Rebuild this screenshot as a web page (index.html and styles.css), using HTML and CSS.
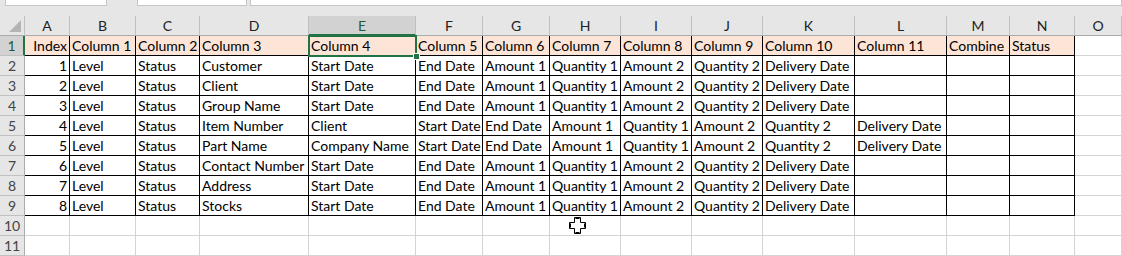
FILE: index.html
```html
<!DOCTYPE html>
<html lang="en">
  <head>
    <meta charset="UTF-8" />
    <title>Sheet1</title>
    <link rel="stylesheet" href="styles.css">
  </head>
  <body>
    <div class="formula-bar">
      <div class="box name-box"></div>
      <div class="box fx-box"></div>
      <div class="box input-box"></div>
    </div>
    <div class="sheet">
      <!-- column headers -->
      <div class="ch corner"><span class="tri"></span></div>
      <div class="ch">A</div><div class="ch">B</div><div class="ch">C</div><div class="ch">D</div>
      <div class="ch active">E</div><div class="ch">F</div><div class="ch">G</div><div class="ch">H</div>
      <div class="ch">I</div><div class="ch">J</div><div class="ch">K</div><div class="ch">L</div>
      <div class="ch">M</div><div class="ch">N</div><div class="ch">O</div>

      <!-- row 1 -->
      <div class="rh active">1</div>
      <div class="c b hd num">Index</div><div class="c b hd">Column 1</div><div class="c b hd">Column 2</div>
      <div class="c b hd">Column 3</div><div class="c b hd sel">Column 4</div><div class="c b hd">Column 5</div>
      <div class="c b hd">Column 6</div><div class="c b hd">Column 7</div><div class="c b hd">Column 8</div>
      <div class="c b hd">Column 9</div><div class="c b hd">Column 10</div><div class="c b hd">Column 11</div>
      <div class="c b hd">Combine</div><div class="c b hd">Status</div><div class="c"></div>

      <!-- row 2 -->
      <div class="rh">2</div>
      <div class="c b num">1</div><div class="c b">Level</div><div class="c b">Status</div>
      <div class="c b">Customer</div><div class="c b">Start Date</div><div class="c b">End Date</div>
      <div class="c b">Amount 1</div><div class="c b">Quantity 1</div><div class="c b">Amount 2</div>
      <div class="c b">Quantity 2</div><div class="c b">Delivery Date</div><div class="c b"></div>
      <div class="c b"></div><div class="c b"></div><div class="c"></div>

      <!-- row 3 -->
      <div class="rh">3</div>
      <div class="c b num">2</div><div class="c b">Level</div><div class="c b">Status</div>
      <div class="c b">Client</div><div class="c b">Start Date</div><div class="c b">End Date</div>
      <div class="c b">Amount 1</div><div class="c b">Quantity 1</div><div class="c b">Amount 2</div>
      <div class="c b">Quantity 2</div><div class="c b">Delivery Date</div><div class="c b"></div>
      <div class="c b"></div><div class="c b"></div><div class="c"></div>

      <!-- row 4 -->
      <div class="rh">4</div>
      <div class="c b num">3</div><div class="c b">Level</div><div class="c b">Status</div>
      <div class="c b">Group Name</div><div class="c b">Start Date</div><div class="c b">End Date</div>
      <div class="c b">Amount 1</div><div class="c b">Quantity 1</div><div class="c b">Amount 2</div>
      <div class="c b">Quantity 2</div><div class="c b">Delivery Date</div><div class="c b"></div>
      <div class="c b"></div><div class="c b"></div><div class="c"></div>

      <!-- row 5 -->
      <div class="rh">5</div>
      <div class="c b num">4</div><div class="c b">Level</div><div class="c b">Status</div>
      <div class="c b">Item Number</div><div class="c b">Client</div><div class="c b">Start Date</div>
      <div class="c b">End Date</div><div class="c b">Amount 1</div><div class="c b">Quantity 1</div>
      <div class="c b">Amount 2</div><div class="c b">Quantity 2</div><div class="c b">Delivery Date</div>
      <div class="c b"></div><div class="c b"></div><div class="c"></div>

      <!-- row 6 -->
      <div class="rh">6</div>
      <div class="c b num">5</div><div class="c b">Level</div><div class="c b">Status</div>
      <div class="c b">Part Name</div><div class="c b">Company Name</div><div class="c b">Start Date</div>
      <div class="c b">End Date</div><div class="c b">Amount 1</div><div class="c b">Quantity 1</div>
      <div class="c b">Amount 2</div><div class="c b">Quantity 2</div><div class="c b">Delivery Date</div>
      <div class="c b"></div><div class="c b"></div><div class="c"></div>

      <!-- row 7 -->
      <div class="rh">7</div>
      <div class="c b num">6</div><div class="c b">Level</div><div class="c b">Status</div>
      <div class="c b">Contact Number</div><div class="c b">Start Date</div><div class="c b">End Date</div>
      <div class="c b">Amount 1</div><div class="c b">Quantity 1</div><div class="c b">Amount 2</div>
      <div class="c b">Quantity 2</div><div class="c b">Delivery Date</div><div class="c b"></div>
      <div class="c b"></div><div class="c b"></div><div class="c"></div>

      <!-- row 8 -->
      <div class="rh">8</div>
      <div class="c b num">7</div><div class="c b">Level</div><div class="c b">Status</div>
      <div class="c b">Address</div><div class="c b">Start Date</div><div class="c b">End Date</div>
      <div class="c b">Amount 1</div><div class="c b">Quantity 1</div><div class="c b">Amount 2</div>
      <div class="c b">Quantity 2</div><div class="c b">Delivery Date</div><div class="c b"></div>
      <div class="c b"></div><div class="c b"></div><div class="c"></div>

      <!-- row 9 -->
      <div class="rh">9</div>
      <div class="c b num">8</div><div class="c b">Level</div><div class="c b">Status</div>
      <div class="c b">Stocks</div><div class="c b">Start Date</div><div class="c b">End Date</div>
      <div class="c b">Amount 1</div><div class="c b">Quantity 1</div><div class="c b">Amount 2</div>
      <div class="c b">Quantity 2</div><div class="c b">Delivery Date</div><div class="c b"></div>
      <div class="c b"></div><div class="c b"></div><div class="c"></div>

      <!-- row 10 -->
      <div class="rh">10</div>
      <div class="c"></div><div class="c"></div><div class="c"></div><div class="c"></div><div class="c"></div>
      <div class="c"></div><div class="c"></div><div class="c"></div><div class="c"></div><div class="c"></div>
      <div class="c"></div><div class="c"></div><div class="c"></div><div class="c"></div><div class="c"></div>

      <!-- row 11 -->
      <div class="rh">11</div>
      <div class="c"></div><div class="c"></div><div class="c"></div><div class="c"></div><div class="c"></div>
      <div class="c"></div><div class="c"></div><div class="c"></div><div class="c"></div><div class="c"></div>
      <div class="c"></div><div class="c"></div><div class="c"></div><div class="c"></div><div class="c"></div>

      <svg class="cursor" width="17" height="17" viewBox="0 0 17 17">
        <path d="M5.5 0.5h6v5h5v6h-5v5h-6v-5h-5v-6h5z" fill="#fff" stroke="#000" stroke-width="1"/>
        <path d="M6.5 1.5h4M6.5 15.5h4M1.5 6.5v4M15.5 6.5v4" stroke="#000" stroke-width="1"/>
      </svg>
    </div>
  </body>
</html>
```

FILE: styles.css
```css
body {
  margin: 0;
  background-color: #fff;
  font-family: Lato, "Liberation Sans", sans-serif;
  overflow: hidden;
}
.formula-bar {
  height: 16px;
  background-color: #e6e6e6;
  position: relative;
}
.box {
  position: absolute;
  top: 0;
  height: 5px;
  background-color: #fff;
  border: 1px solid #c6c6c6;
  border-top: none;
}
.name-box {
  left: 5px;
  width: 100px;
}
.fx-box {
  left: 137px;
  width: 108px;
}
.input-box {
  left: 250px;
  right: 0;
}
.sheet {
  display: grid;
  grid-template-columns: 25px 45px 66px 64px 109px 107px 67px 67px 71px 71px 71px 92px 92px 63px 65px 47px;
  grid-auto-rows: 20px;
  position: relative;
}
.sheet > div {
  box-sizing: border-box;
}
.ch {
  background-color: #e6e6e6;
  border-right: 1px solid #c0c0c0;
  border-bottom: 1px solid #ababab;
  font-size: 14px;
  color: #222;
  text-align: center;
  line-height: 20px;
}
.ch.active {
  background-color: #d2d2d2;
  border-bottom: 2px solid #217346;
  color: #1e5b37;
}
.corner {
  position: relative;
}
.tri {
  position: absolute;
  right: 3px;
  bottom: 3px;
  width: 0;
  height: 0;
  border-left: 12px solid transparent;
  border-bottom: 12px solid #b4b4b4;
}
.rh {
  background-color: #e6e6e6;
  border-right: 1px solid #ababab;
  border-bottom: 1px solid #c0c0c0;
  font-size: 14px;
  color: #444;
  text-align: center;
  line-height: 20px;
}
.rh.active {
  background-color: #d2d2d2;
  border-right: 2px solid #217346;
  color: #1e5b37;
}
.c {
  border-right: 1px solid #d4d4d4;
  border-bottom: 1px solid #d4d4d4;
  font-size: 14px;
  color: #000;
  line-height: 20px;
  padding: 0 2px;
  white-space: nowrap;
  overflow: hidden;
}
.c.b {
  border-right-color: #000;
  border-bottom-color: #000;
}
.c.hd {
  background-color: #fce4d6;
}
.c.num {
  text-align: right;
}
.c.sel {
  overflow: visible;
  position: relative;
  outline: 2px solid #217346;
  outline-offset: -1px;
  z-index: 1;
}
.c.sel::after {
  content: "";
  position: absolute;
  right: -5px;
  bottom: -5px;
  width: 5px;
  height: 5px;
  background-color: #217346;
  border: 1px solid #fff;
}
.cursor {
  position: absolute;
  left: 569px;
  top: 201px;
  z-index: 2;
}
```
